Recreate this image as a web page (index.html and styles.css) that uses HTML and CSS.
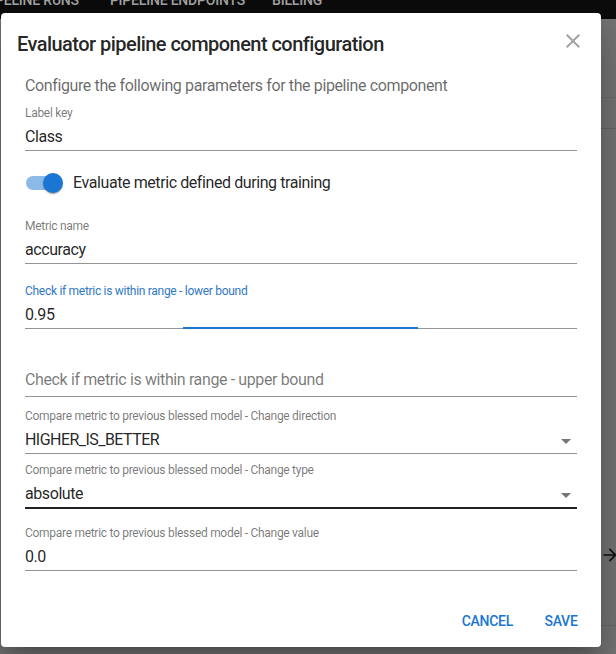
FILE: index.html
```html
<!DOCTYPE html>
<html lang="en">
<head>
<meta charset="utf-8">
<title>Evaluator pipeline component configuration</title>
<link rel="stylesheet" href="styles.css">
</head>
<body>
<div class="page">
  <header class="appbar">
    <nav class="appbar-nav">
      <span class="nav-item nav-first">PELINE RUNS</span>
      <span class="nav-item">PIPELINE ENDPOINTS</span>
      <span class="nav-item">BILLING</span>
    </nav>
  </header>
  <div class="page-row row-a"></div>
  <div class="page-row row-b"></div>
  <div class="page-row row-c">
    <svg class="page-arrow" viewBox="0 0 24 24" width="20" height="20" aria-hidden="true"><path d="M12 4l-1.41 1.41L16.17 11H4v2h12.17l-5.58 5.59L12 20l8-8z"/></svg>
  </div>
</div>

<div class="dialog" role="dialog" aria-labelledby="dlg-title">
  <div class="dialog-title-row">
    <h2 class="dialog-title" id="dlg-title">Evaluator pipeline component configuration</h2>
    <button class="close-btn" aria-label="close">
      <svg viewBox="0 0 24 24" width="24" height="24"><path d="M19 6.41L17.59 5 12 10.59 6.41 5 5 6.41 10.59 12 5 17.59 6.41 19 12 13.41 17.59 19 19 17.59 13.41 12z"/></svg>
    </button>
  </div>

  <div class="dialog-content">
    <p class="dialog-text">Configure the following parameters for the pipeline component</p>

    <div class="field field-first">
      <label class="field-label">Label key</label>
      <div class="field-input">Class</div>
    </div>

    <div class="switch-row">
      <span class="switch">
        <span class="switch-track"></span>
        <span class="switch-thumb"></span>
      </span>
      <span class="switch-label">Evaluate metric defined during training</span>
    </div>

    <div class="field field-metric">
      <label class="field-label">Metric name</label>
      <div class="field-input">accuracy</div>
    </div>

    <div class="field field-lower">
      <label class="field-label is-focused">Check if metric is within range - lower bound</label>
      <div class="field-input">0.95<span class="focus-bar" style="left:158px;width:235px"></span></div>
    </div>

    <div class="field field-upper">
      <label class="field-label is-empty"></label>
      <div class="field-input is-placeholder">Check if metric is within range - upper bound</div>
    </div>

    <div class="field field-direction">
      <label class="field-label">Compare metric to previous blessed model - Change direction</label>
      <div class="field-input is-select">
        <span class="caps-value">HIGHER_IS_BETTER</span>
        <svg class="select-arrow" viewBox="0 0 10 5" width="10" height="5"><path d="M0 0l5 5 5-5z"/></svg>
      </div>
    </div>

    <div class="field field-type">
      <label class="field-label">Compare metric to previous blessed model - Change type</label>
      <div class="field-input is-select is-hover">
        <span>absolute</span>
        <svg class="select-arrow" viewBox="0 0 10 5" width="10" height="5"><path d="M0 0l5 5 5-5z"/></svg>
      </div>
    </div>

    <div class="field field-value">
      <label class="field-label">Compare metric to previous blessed model - Change value</label>
      <div class="field-input">0.0</div>
    </div>
  </div>

  <div class="dialog-actions">
    <button class="text-btn">Cancel</button>
    <button class="text-btn">Save</button>
  </div>
</div>
</body>
</html>
```

FILE: styles.css
```css
* { box-sizing: border-box; }

html, body {
  margin: 0;
  padding: 0;
  width: 616px;
  height: 654px;
  overflow: hidden;
  font-family: Roboto, "Liberation Sans", sans-serif;
}

.page {
  width: 616px;
  height: 654px;
  background: #757575;
  display: flex;
  flex-direction: column;
}

.appbar {
  height: 19px;
  background: #0c0c0c;
  overflow: hidden;
  flex: none;
}

.appbar-nav {
  display: flex;
  margin-top: -8px;
}

.nav-item {
  font-size: 14px;
  font-weight: 500;
  line-height: 16px;
  letter-spacing: -0.2px;
  color: #a8a8a8;
  margin-right: 27px;
  white-space: nowrap;
}

.nav-first { margin-left: -5px; margin-right: 31px; }

.page-row { flex: none; }
.row-a { height: 79px; border-bottom: 1px solid #6d6d6d; }
.row-b { height: 31px; border-bottom: 1px solid #666666; }
.row-c {
  height: 497px;
  border-bottom: 1px solid #6a6a6a;
  display: flex;
  justify-content: flex-end;
  align-items: flex-end;
  padding-bottom: 60px;
  margin-right: -4px;
}

.page-arrow { fill: #111; display: block; }

/* Dialog (overlay) */
.dialog {
  position: absolute;
  left: 1px;
  top: 13px;
  width: 600px;
  height: 634px;
  background: #fff;
  border-radius: 4px;
  box-shadow: 0 11px 15px -7px rgba(0,0,0,.2), 0 24px 38px 3px rgba(0,0,0,.14), 0 9px 46px 8px rgba(0,0,0,.12);
  display: flex;
  flex-direction: column;
  color: rgba(0,0,0,0.87);
}

.dialog-title-row {
  display: flex;
  justify-content: space-between;
  align-items: flex-start;
  padding: 15px 16px 0 16px;
}

.dialog-title {
  margin: 0;
  font-size: 20px;
  font-weight: 500;
  line-height: 32px;
  letter-spacing: -0.54px;
  color: rgba(0,0,0,0.87);
}

.close-btn {
  border: 0;
  background: none;
  padding: 0;
  margin-top: 1px;
  width: 24px;
  height: 24px;
  cursor: pointer;
}

.close-btn svg { display: block; fill: #a3a3a3; }

.dialog-content {
  padding: 0 24px;
}

.dialog-text {
  margin: 14px 0 0;
  font-size: 16px;
  line-height: 24px;
  letter-spacing: -0.38px;
  color: rgba(0,0,0,0.6);
}

.field { display: block; }
.field-first { margin-top: 8px; }
.field-metric { margin-top: 17px; }
.field-lower { margin-top: 20px; }
.field-upper { margin-top: 23px; }
.field-direction { margin-top: 12px; }
.field-type { margin-top: 9px; }
.field-value { margin-top: 17px; }

.field-label {
  display: block;
  height: 14px;
  font-size: 12px;
  line-height: 14px;
  color: rgba(0,0,0,0.54);
  letter-spacing: -0.29px;
  white-space: nowrap;
}

.field-label.is-focused { color: #2f78c4; }
.field-label.is-empty { height: 11px; }

.field-input {
  position: relative;
  margin-top: 7px;
  font-size: 16px;
  line-height: 19px;
  padding-bottom: 4px;
  letter-spacing: -0.42px;
  color: rgba(0,0,0,0.87);
  border-bottom: 1px solid rgba(0,0,0,0.42);
}

.caps-value { letter-spacing: -0.54px; }

.field-input.is-placeholder {
  color: rgba(0,0,0,0.54);
  padding-bottom: 7px;
  letter-spacing: -0.38px;
}

.field-input.is-select {
  display: flex;
  justify-content: space-between;
  align-items: center;
}

.field-input.is-hover { border-bottom: 2px solid rgba(0,0,0,0.87); }

.select-arrow {
  display: block;
  fill: rgba(0,0,0,0.54);
  margin-right: 6px;
  margin-top: 3px;
}

.focus-bar {
  position: absolute;
  bottom: -1px;
  height: 2px;
  background: #1976d2;
}

.switch-row {
  display: flex;
  align-items: center;
  height: 38px;
  margin-top: 13px;
  margin-left: -11px;
}

.switch {
  position: relative;
  width: 58px;
  height: 38px;
  padding: 12px;
  flex: none;
}

.switch-track {
  display: block;
  width: 34px;
  height: 14px;
  border-radius: 7px;
  background: #1976d2;
  opacity: 0.5;
}

.switch-thumb {
  position: absolute;
  top: 9px;
  left: 29px;
  width: 20px;
  height: 20px;
  border-radius: 50%;
  background: #1976d2;
  box-shadow: 0 2px 1px -1px rgba(0,0,0,.2), 0 1px 1px 0 rgba(0,0,0,.14), 0 1px 3px 0 rgba(0,0,0,.12);
}

.switch-label {
  margin-left: 1px;
  font-size: 16px;
  line-height: 24px;
  letter-spacing: -0.41px;
  color: rgba(0,0,0,0.87);
}

.dialog-actions {
  margin-top: auto;
  display: flex;
  justify-content: flex-end;
  gap: 8px;
  padding: 8px;
}

.text-btn {
  font-family: Roboto, "Liberation Sans", sans-serif;
  font-size: 14px;
  font-weight: 500;
  line-height: 24px;
  letter-spacing: -0.27px;
  text-transform: uppercase;
  color: #1976d2;
  background: none;
  border: 0;
  padding: 6px 8px;
  min-width: 64px;
  border-radius: 4px;
  cursor: pointer;
}
```
